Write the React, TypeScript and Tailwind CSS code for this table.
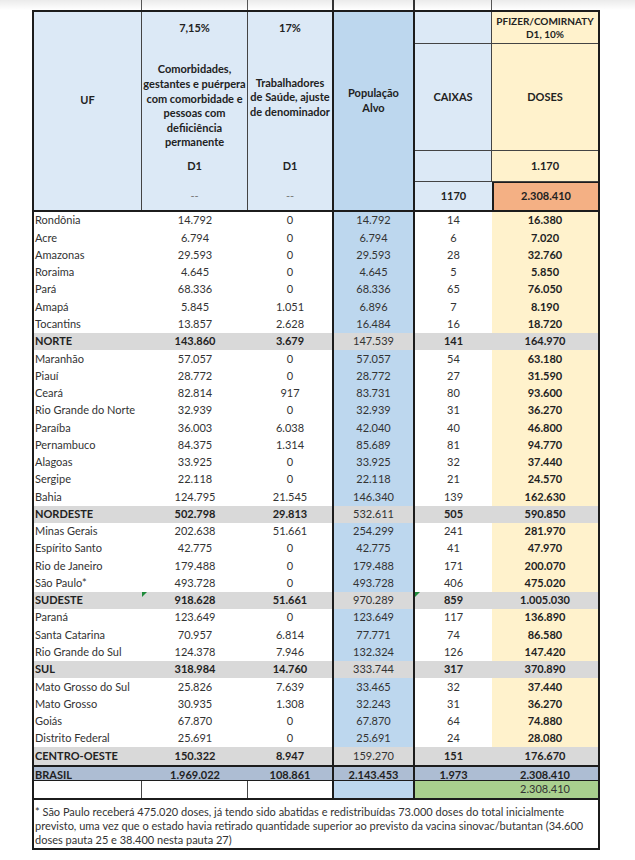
type Row = {
  uf: string;
  a: string;
  b: string;
  pop: string;
  cx: string;
  doses: string;
  total?: boolean;
  mark?: boolean;
};

const rows: Row[] = [
  { uf: "Rondônia", a: "14.792", b: "0", pop: "14.792", cx: "14", doses: "16.380" },
  { uf: "Acre", a: "6.794", b: "0", pop: "6.794", cx: "6", doses: "7.020" },
  { uf: "Amazonas", a: "29.593", b: "0", pop: "29.593", cx: "28", doses: "32.760" },
  { uf: "Roraima", a: "4.645", b: "0", pop: "4.645", cx: "5", doses: "5.850" },
  { uf: "Pará", a: "68.336", b: "0", pop: "68.336", cx: "65", doses: "76.050" },
  { uf: "Amapá", a: "5.845", b: "1.051", pop: "6.896", cx: "7", doses: "8.190" },
  { uf: "Tocantins", a: "13.857", b: "2.628", pop: "16.484", cx: "16", doses: "18.720" },
  { uf: "NORTE", a: "143.860", b: "3.679", pop: "147.539", cx: "141", doses: "164.970", total: true },
  { uf: "Maranhão", a: "57.057", b: "0", pop: "57.057", cx: "54", doses: "63.180" },
  { uf: "Piauí", a: "28.772", b: "0", pop: "28.772", cx: "27", doses: "31.590" },
  { uf: "Ceará", a: "82.814", b: "917", pop: "83.731", cx: "80", doses: "93.600" },
  { uf: "Rio Grande do Norte", a: "32.939", b: "0", pop: "32.939", cx: "31", doses: "36.270" },
  { uf: "Paraíba", a: "36.003", b: "6.038", pop: "42.040", cx: "40", doses: "46.800" },
  { uf: "Pernambuco", a: "84.375", b: "1.314", pop: "85.689", cx: "81", doses: "94.770" },
  { uf: "Alagoas", a: "33.925", b: "0", pop: "33.925", cx: "32", doses: "37.440" },
  { uf: "Sergipe", a: "22.118", b: "0", pop: "22.118", cx: "21", doses: "24.570" },
  { uf: "Bahia", a: "124.795", b: "21.545", pop: "146.340", cx: "139", doses: "162.630" },
  { uf: "NORDESTE", a: "502.798", b: "29.813", pop: "532.611", cx: "505", doses: "590.850", total: true },
  { uf: "Minas Gerais", a: "202.638", b: "51.661", pop: "254.299", cx: "241", doses: "281.970" },
  { uf: "Espírito Santo", a: "42.775", b: "0", pop: "42.775", cx: "41", doses: "47.970" },
  { uf: "Rio de Janeiro", a: "179.488", b: "0", pop: "179.488", cx: "171", doses: "200.070" },
  { uf: "São Paulo*", a: "493.728", b: "0", pop: "493.728", cx: "406", doses: "475.020" },
  { uf: "SUDESTE", a: "918.628", b: "51.661", pop: "970.289", cx: "859", doses: "1.005.030", total: true, mark: true },
  { uf: "Paraná", a: "123.649", b: "0", pop: "123.649", cx: "117", doses: "136.890" },
  { uf: "Santa Catarina", a: "70.957", b: "6.814", pop: "77.771", cx: "74", doses: "86.580" },
  { uf: "Rio Grande do Sul", a: "124.378", b: "7.946", pop: "132.324", cx: "126", doses: "147.420" },
  { uf: "SUL", a: "318.984", b: "14.760", pop: "333.744", cx: "317", doses: "370.890", total: true },
  { uf: "Mato Grosso do Sul", a: "25.826", b: "7.639", pop: "33.465", cx: "32", doses: "37.440" },
  { uf: "Mato Grosso", a: "30.935", b: "1.308", pop: "32.243", cx: "31", doses: "36.270" },
  { uf: "Goiás", a: "67.870", b: "0", pop: "67.870", cx: "64", doses: "74.880" },
  { uf: "Distrito Federal", a: "25.691", b: "0", pop: "25.691", cx: "24", doses: "28.080" },
  { uf: "CENTRO-OESTE", a: "150.322", b: "8.947", pop: "159.270", cx: "151", doses: "176.670", total: true },
];

const cols = "grid grid-cols-[108px_106px_84px_83px_77px_106px]";

// small green error flag excel draws in a cell corner
function Flag() {
  return (
    <span className="absolute top-0 left-0 w-0 h-0 border-t-[5px] border-t-[#1f8b3b] border-r-[5px] border-r-transparent" />
  );
}

function DataRow({ r }: { r: Row }) {
  const bg = r.total ? "bg-[#d9d9d9]" : "";
  const bold = r.total ? "font-bold text-[#222]" : "";
  return (
    <div className={`${cols} h-[17.28px] items-stretch ${bg}`}>
      <div className={`flex items-center pl-px ${bold}`}>{r.uf}</div>
      <div className={`relative flex items-center justify-center ${bold}`}>
        {r.mark && <Flag />}
        {r.a}
      </div>
      <div className={`flex items-center justify-center ${bold}`}>{r.b}</div>
      <div
        className={`flex items-center justify-center border-x-2 border-[#1c1c1c] ${
          r.total ? "" : "bg-[#bdd7ee]"
        }`}
      >
        {r.pop}
      </div>
      <div className={`relative flex items-center justify-center ${bold}`}>
        {r.mark && <Flag />}
        {r.cx}
      </div>
      <div
        className={`flex items-center justify-center font-bold text-[#222] ${
          r.total ? "" : "bg-[#fff2cc]"
        }`}
      >
        {r.doses}
      </div>
    </div>
  );
}

export default function App() {
  return (
    <div className="w-[635px] h-[860px] bg-white font-['Lato',sans-serif] text-[11px] text-[#333]">
      {/* strip above the table, grid lines from the sheet continue up */}
      <div className="h-[10px] bg-linear-to-b from-[#ebebeb] to-white">
        <div className={`${cols} ml-[34px] w-[564px] h-full`}>
          <div className="border-r border-[#555]" />
          <div className="border-r border-[#555]" />
          <div />
          <div className="border-x-2 border-[#333]" />
          <div className="border-r border-[#555]" />
          <div />
        </div>
      </div>

      <div className="ml-[32px] w-[568px] border-2 border-[#1c1c1c]">
        {/* header */}
        <div className={`${cols} grid-rows-[32px_107px_31px_28px] border-b-2 border-[#1c1c1c] font-bold text-[#222]`}>
          <div className="row-span-4 flex items-center justify-center pb-[22px] bg-[#dce9f6] border-r border-[#444]">
            UF
          </div>
          <div className="row-span-4 flex flex-col bg-[#dce9f6] border-r border-[#444] text-center">
            <div className="h-[32px] flex items-center justify-center">7,15%</div>
            <div className="h-[107px] flex items-end justify-center pb-px leading-[14.6px]">
              Comorbidades,
              <br />
              gestantes e puérpera
              <br />
              com comorbidade e
              <br />
              pessoas com
              <br />
              defiiciência
              <br />
              permanente
            </div>
            <div className="h-[31px] flex items-center justify-center">D1</div>
            <div className="h-[28px] flex items-center justify-center font-normal text-[#777]">--</div>
          </div>
          <div className="row-span-4 flex flex-col bg-[#dce9f6] text-center">
            <div className="h-[32px] flex items-center justify-center">17%</div>
            <div className="h-[107px] flex items-center justify-center leading-[14.6px] whitespace-nowrap">
              Trabalhadores
              <br />
              de Saúde, ajuste
              <br />
              de denominador
            </div>
            <div className="h-[31px] flex items-center justify-center">D1</div>
            <div className="h-[28px] flex items-center justify-center font-normal text-[#777]">--</div>
          </div>
          <div className="row-span-4 flex items-center justify-center pb-[23px] bg-[#bdd7ee] border-x-2 border-[#1c1c1c] text-center leading-[15px]">
            População
            <br />
            Alvo
          </div>

          <div className="col-start-5 row-start-1 bg-[#dce9f6] border-r border-b border-[#444]" />
          <div className="col-start-6 row-start-1 flex items-center justify-center bg-[#fff2cc] border-b border-[#444] text-[10px] leading-[13px] text-center">
            PFIZER/COMIRNATY
            <br />
            D1, 10%
          </div>

          <div className="col-start-5 row-start-2 flex items-center justify-center bg-[#dce9f6] border-r border-b border-[#444]">
            CAIXAS
          </div>
          <div className="col-start-6 row-start-2 flex items-center justify-center bg-[#fff2cc] border-b border-[#444]">
            DOSES
          </div>

          <div className="col-start-5 row-start-3 bg-[#dce9f6] border-r border-b border-[#444]" />
          <div className="col-start-6 row-start-3 flex items-center justify-center bg-[#fff2cc] border-b border-[#444]">
            1.170
          </div>

          <div className="col-start-5 row-start-4 flex items-center justify-center bg-[#dce9f6]">1170</div>
          <div className="col-start-6 row-start-4 flex items-center justify-center bg-[#f4b084] border-t border-l-2 border-[#1c1c1c]">
            2.308.410
          </div>
        </div>

        {/* states and regions */}
        {rows.map((r) => (
          <DataRow key={r.uf} r={r} />
        ))}

        {/* total */}
        <div className={`${cols} h-[16px] border-t-2 border-b border-[#1c1c1c] bg-[#adbdd3] font-bold text-[#222]`}>
          <div className="flex items-center pl-px">BRASIL</div>
          <div className="flex items-center justify-center">1.969.022</div>
          <div className="flex items-center justify-center">108.861</div>
          <div className="flex items-center justify-center border-x-2 border-[#1c1c1c]">2.143.453</div>
          <div className="flex items-center justify-center">1.973</div>
          <div className="flex items-center justify-center">2.308.410</div>
        </div>

        <div className={`${cols} h-[17px]`}>
          <div className="border-r border-[#444]" />
          <div className="border-r border-[#444]" />
          <div />
          <div className="bg-[#bdd7ee] border-x-2 border-[#1c1c1c]" />
          <div className="bg-[#a9d08e]" />
          <div className="flex items-center justify-center bg-[#a9d08e]">2.308.410</div>
        </div>

        {/* note */}
        <div className="border-t-2 border-[#1c1c1c] pt-[5px] pb-px pl-px leading-[14px] whitespace-nowrap">
          * São Paulo receberá 475.020 doses, já tendo sido abatidas e redistribuídas 73.000 doses do total inicialmente
          <br />
          previsto, uma vez que o estado havia retirado quantidade superior ao previsto da vacina sinovac/butantan (34.600
          <br />
          doses pauta 25 e 38.400 nesta pauta 27)
        </div>
      </div>
    </div>
  );
}
